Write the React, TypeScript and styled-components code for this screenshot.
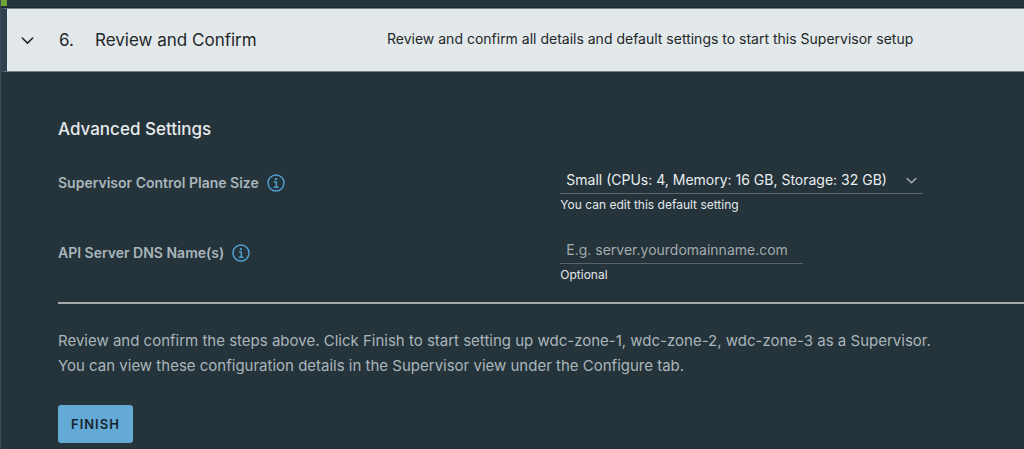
import React from 'react';
import styled, { createGlobalStyle } from 'styled-components';

const GlobalStyle = createGlobalStyle`
  *, *::before, *::after { box-sizing: border-box; }
  html { background: #25333a; }
  body {
    margin: 0;
    color: #a9b6bc;
    font-family: Inter, "Open Sans", sans-serif;
    font-size: 15px;
  }
  h2, h3, p { margin: 0; }
  h2 { font-size: 17px; font-weight: 400; }
`;

const Wizard = styled.main`
  min-height: 100vh;
  border-left: 1px solid #3a4a56;
  background: #25333a;
`;

const PreviousStep = styled.div`
  height: 8px;
  border-bottom: 1px solid #1d2930;
`;

const DoneMarker = styled.div`
  width: 6px;
  height: 6px;
  background: #6fa534;
`;

const StepHeader = styled.header`
  display: grid;
  grid-template-columns: 380px 1fr;
  align-items: center;
  height: 64px;
  border-left: 6px solid #304250;
  border-top: 1px solid #71828d;
  border-bottom: 1px solid #71828d;
  background: #e3e8ea;
  color: #22272a;
`;

const StepToggle = styled.button`
  display: flex;
  align-items: center;
  padding: 0 0 0 14px;
  border: 0;
  background: none;
  color: inherit;
  font: inherit;
  line-height: 24px;
  text-align: left;
`;

const StepNumber = styled.span`
  width: 36px;
  margin-left: 25px;
`;

const StepSummary = styled.p`
  padding-bottom: 2px;
  font-size: 14px;
  line-height: 20px;
`;

const StepBody = styled.section`
  padding: 45px 0 6px 57px;
`;

const SectionTitle = styled.h3`
  margin-bottom: 27px;
  color: #e6ebed;
  font-size: 17px;
  font-weight: 500;
  line-height: 24px;
`;

const Settings = styled.form`
  display: grid;
  gap: 25px;
`;

const Setting = styled.div`
  display: grid;
  grid-template-columns: 52% 1fr;
  align-items: start;
`;

const LabelCell = styled.div`
  display: flex;
  align-items: center;
  gap: 8px;
  height: 29px;
`;

const Label = styled.label`
  font-size: 14px;
  font-weight: 600;
`;

const InfoButton = styled.button`
  display: flex;
  padding: 0;
  border: 0;
  background: none;
  color: #4f9fd0;
`;

const Control = styled.div<{ $width: number }>`
  position: relative;
  width: ${(p) => p.$width}px;
  max-width: 100%;
`;

const controlBase = `
  display: block;
  width: 100%;
  height: 26px;
  padding: 0 6px 2px;
  border: 0;
  border-bottom: 1px solid #5b6467;
  border-radius: 0;
  outline: 0;
  background: transparent;
  font-family: inherit;
  font-size: 14px;
`;

const Select = styled.select`
  ${controlBase}
  appearance: none;
  color: #e9eef0;
`;

const TextInput = styled.input`
  ${controlBase}
  color: #e9eef0;
  &::placeholder { color: #a3abae; opacity: 1; }
`;

const SelectArrow = styled.span`
  position: absolute;
  top: 7px;
  right: 6px;
  display: flex;
  color: #a9b4b9;
  pointer-events: none;
`;

const Hint = styled.p`
  padding-top: 3px;
  color: #e3e9eb;
  font-size: 12px;
  line-height: 16px;
`;

const Divider = styled.hr`
  height: 2px;
  margin: 19px 0 24px;
  border: 0;
  background: #a4aaab;
`;

const Closing = styled.p`
  line-height: 25px;
`;

const FinishButton = styled.button`
  display: block;
  height: 38px;
  margin-top: 27px;
  padding: 0 13px;
  border: 0;
  border-radius: 3px;
  background: #63aad6;
  color: #17242c;
  font-family: inherit;
  font-size: 13px;
  font-weight: 600;
  letter-spacing: 1px;
`;

function Chevron({ width }: { width: number }) {
  return (
    <svg width={width} height={width} viewBox="0 0 12 12" fill="none" aria-hidden="true">
      <path d="M1.2 3.7 6 8.4l4.8-4.7" stroke="currentColor" strokeWidth="1.5" strokeLinecap="round" strokeLinejoin="round" />
    </svg>
  );
}

function Info({ about }: { about: string }) {
  return (
    <InfoButton type="button" aria-label={`About ${about}`}>
      <svg width="18" height="18" viewBox="0 0 18 18" fill="none" stroke="currentColor" aria-hidden="true">
        <circle cx="9" cy="9" r="8" strokeWidth="1.5" />
        <circle cx="8.9" cy="5.1" r="1.2" fill="currentColor" stroke="none" />
        <path d="M7 8h2.3v5M6.7 13.2h4.8" strokeWidth="1.4" />
      </svg>
    </InfoButton>
  );
}

export default function App() {
  return (
    <>
      <GlobalStyle />
      <Wizard>
        <PreviousStep>
          <DoneMarker />
        </PreviousStep>
        <StepHeader>
          <h2>
            <StepToggle type="button" aria-expanded="true">
              <Chevron width={13} />
              <StepNumber>6.</StepNumber>
              Review and Confirm
            </StepToggle>
          </h2>
          <StepSummary>Review and confirm all details and default settings to start this Supervisor setup</StepSummary>
        </StepHeader>
        <StepBody>
          <SectionTitle>Advanced Settings</SectionTitle>
          <Settings>
            <Setting>
              <LabelCell>
                <Label htmlFor="plane-size">Supervisor Control Plane Size</Label>
                <Info about="Supervisor Control Plane Size" />
              </LabelCell>
              <Control $width={363}>
                <Select id="plane-size" defaultValue="small">
                  <option value="small">Small (CPUs: 4, Memory: 16 GB, Storage: 32 GB)</option>
                </Select>
                <SelectArrow>
                  <Chevron width={11} />
                </SelectArrow>
                <Hint>You can edit this default setting</Hint>
              </Control>
            </Setting>
            <Setting>
              <LabelCell>
                <Label htmlFor="dns-names">API Server DNS Name(s)</Label>
                <Info about="API Server DNS Names" />
              </LabelCell>
              <Control $width={243}>
                <TextInput id="dns-names" type="text" placeholder="E.g. server.yourdomainname.com" />
                <Hint>Optional</Hint>
              </Control>
            </Setting>
          </Settings>
          <Divider />
          <Closing>
            Review and confirm the steps above. Click Finish to start setting up wdc-zone-1, wdc-zone-2, wdc-zone-3 as a Supervisor.
            <br />
            You can view these configuration details in the Supervisor view under the Configure tab.
          </Closing>
          <FinishButton type="button">FINISH</FinishButton>
        </StepBody>
      </Wizard>
    </>
  );
}
